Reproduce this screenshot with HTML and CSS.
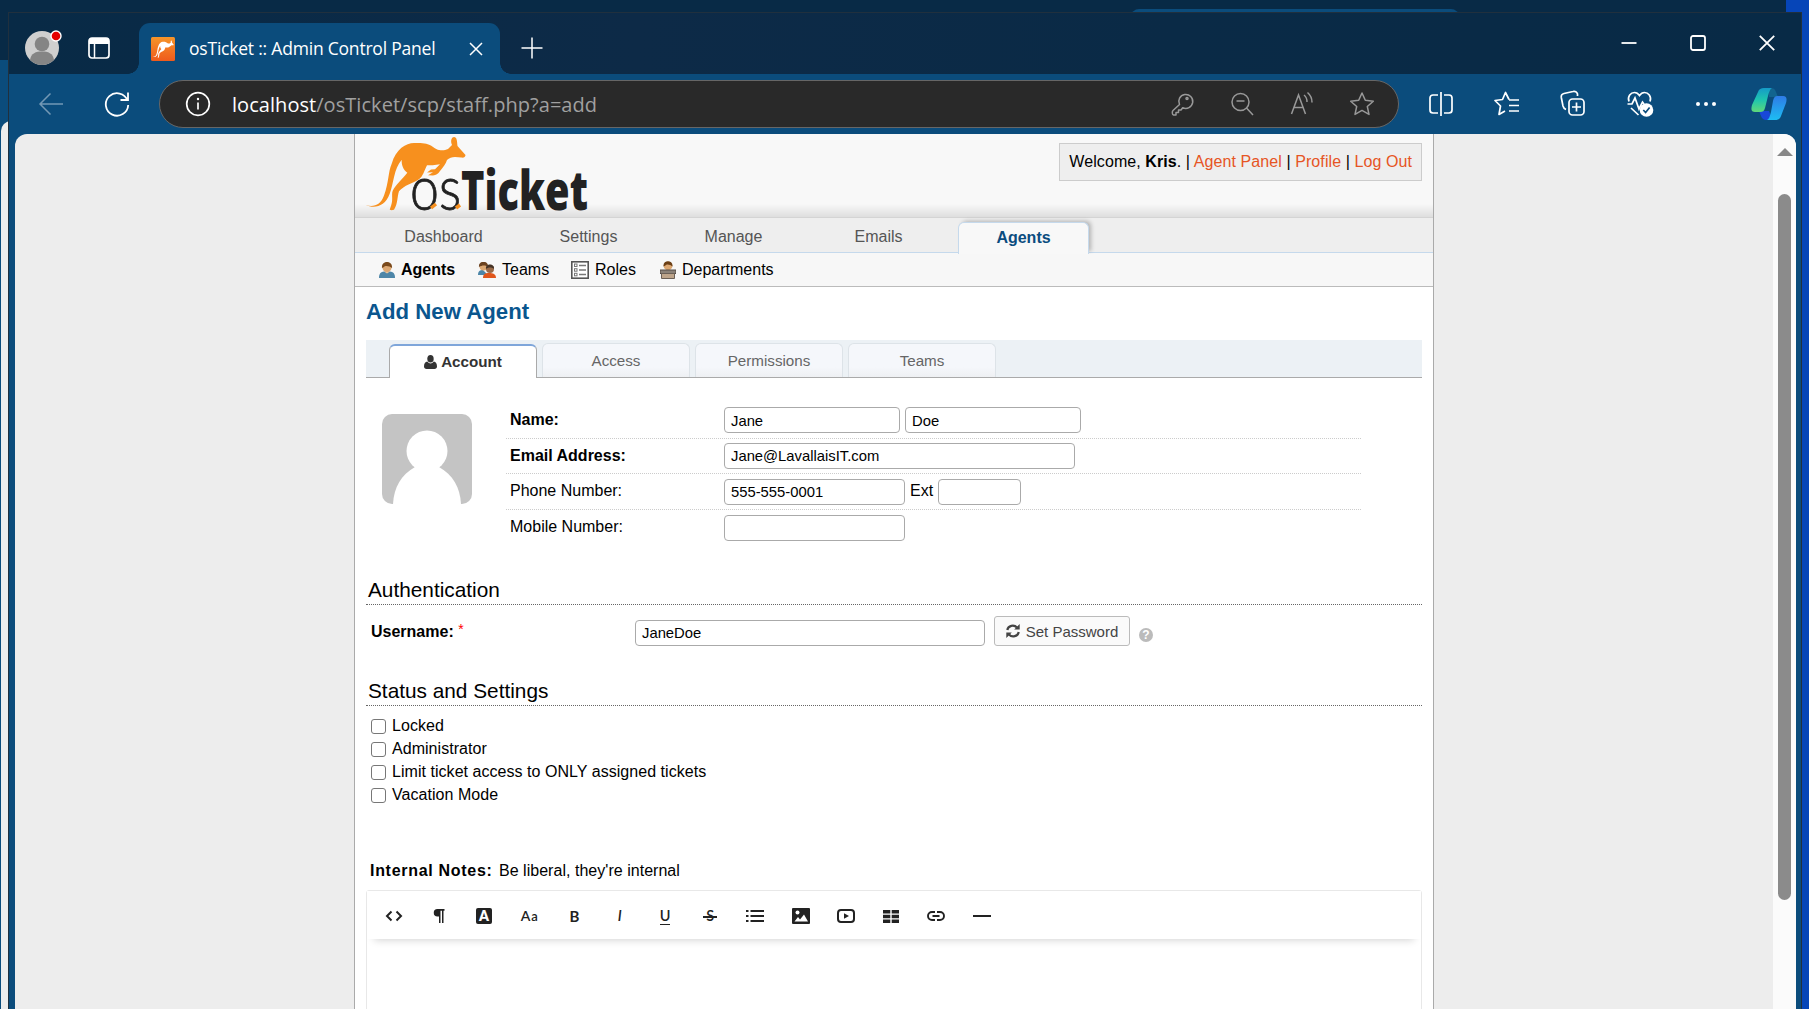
FILE: index.html
```html
<!DOCTYPE html>
<html lang="en">
<head>
<meta charset="utf-8">
<title>osTicket :: Admin Control Panel</title>
<link rel="stylesheet" href="styles.css">
</head>
<body>
<div class="desktop">
  <div class="back-window"><div class="back-strip"></div><div class="back-side"></div><div class="back-page"></div></div>
  <div class="window">
    <header class="titlebar">
      <svg class="profile" width="38" height="38" viewBox="0 0 38 38">
        <circle cx="18" cy="20" r="17" fill="#cfcfcf"/><circle cx="18" cy="16" r="7.3" fill="#858585"/>
        <path d="M6 32c1-7 6-8.500 12-8.500s11 1.500 12 8.500a17 17 0 0 1-24 0z" fill="#858585"/>
        <circle cx="32" cy="8" r="5" fill="#e60000" stroke="#fff" stroke-width="1.400"/>
      </svg>
      <svg class="workspaces" width="22" height="22" viewBox="0 0 22 22">
        <rect x="1" y="1" width="20" height="20" rx="3" fill="none" stroke="#fff" stroke-width="1.700"/><path d="M1 7V4a3 3 0 0 1 3-3h14a3 3 0 0 1 3 3v3z" fill="#fff"/><path d="M6.500 6v15" stroke="#fff" stroke-width="1.500"/>
      </svg>
      <div class="browser-tab">
        <svg class="favicon" width="24" height="24" viewBox="0 0 24 24">
          <defs><linearGradient id="fav" x1="0" y1="0" x2="0" y2="1"><stop offset="0" stop-color="#f6952a"/><stop offset="1" stop-color="#ef5a1c"/></linearGradient></defs>
          <rect width="24" height="24" rx="1.500" fill="url(#fav)"/>
          <path transform="translate(1.200 3.200) scale(.212 .235)" fill="#fff" d="M1.700 69c8 2.500 15 0 18.300-9.500C25 46 24 36 27.700 27.700 32 13 42 7 50 7c18-1 18 5 25 7 3 .5 6 .5 9-1l4-4c-2-5 0-8 2-8 3 0 3 4 3.500 9l8 9c0 2-2 3-4 2.500L91 21c-4 3-8 6-13 9-5 1-10 1-15 0-3 5-4 11-8 14-6 4-15 6-20 12-2 6-1 12-5 18.500-3 1-5 0-4-1 4-9 1-13 2.700-18 3-6 10-12 14.600-18-4-3-6-8-5.600-13-8 9-8 24-12 34C20 72 10 74 1.700 69z"/>
        </svg>
        <span class="tab-title">osTicket :: Admin Control Panel</span>
        <svg class="tab-close" width="14" height="14" viewBox="0 0 14 14"><path d="M1 1l12 12M13 1L1 13" stroke="#fff" stroke-width="1.500"/></svg>
      </div>
      <svg class="tab-new" width="22" height="22" viewBox="0 0 22 22"><path d="M11 .5v21M.5 11h21" stroke="#fff" stroke-width="1.500"/></svg>
      <div class="win-controls">
        <svg width="16" height="16" viewBox="0 0 16 16"><path d="M.5 8h15" stroke="#fff" stroke-width="1.800"/></svg>
        <svg width="16" height="16" viewBox="0 0 16 16"><rect x="1" y="1" width="14" height="14" rx="2" fill="none" stroke="#fff" stroke-width="1.800"/></svg>
        <svg width="16" height="16" viewBox="0 0 16 16"><path d="M.8.800l14.400 14.400M15.200.800L.8 15.200" stroke="#fff" stroke-width="1.800"/></svg>
      </div>
    </header>

    <nav class="toolbar">
      <svg class="back" width="26" height="26" viewBox="0 0 26 26" fill="none" stroke="#7398b5" stroke-width="1.500"><path d="M25 13H2M12.500 2.500L2 13l10.500 10.500"/></svg>
      <svg class="reload" width="26" height="26" viewBox="0 0 26 26" fill="none" stroke="#fff" stroke-width="1.800"><path d="M23.500 9.500A11.200 11.200 0 1 0 24.200 14M24 1.500v7.500h-7.500"/></svg>
      <div class="address">
        <svg width="26" height="26" viewBox="0 0 26 26"><circle cx="13" cy="13" r="11.300" fill="none" stroke="#fff" stroke-width="1.700"/><path d="M13 11.500v7" stroke="#fff" stroke-width="1.700"/><circle cx="13" cy="8" r="1.200" fill="#fff"/></svg>
        <span class="url"><b>localhost</b>/osTicket/scp/staff.php?a=add</span>
        <div class="address-actions">
          <svg width="26" height="26" viewBox="0 0 26 26"><path d="M10.500 13.500L4 19.500c-1 1-1 4 .5 4.500H7v-2.500h2.500V19H12l1.700-2.300a7 7 0 1 0-3.200-3.200z" stroke-linejoin="round"/><circle cx="18" cy="7.500" r="1"/></svg>
          <svg width="26" height="26" viewBox="0 0 26 26"><circle cx="11.500" cy="11" r="8.500"/><path d="M7.500 10h8M17.500 17l6.500 7"/></svg>
          <svg width="26" height="26" viewBox="0 0 26 26"><path d="M2.500 23L9.500 4l7 19M5 16.500h9M15 4c2 1.500 3 4 3 7M18.500 1.500c3 2.500 4.500 6 4.500 10"/></svg>
          <svg width="26" height="26" viewBox="0 0 26 26"><path d="M13 2l3.300 7.300 8 .9-6 5.300 1.700 7.900-7-4-7 4 1.700-7.900-6-5.300 8-.9z" stroke-linejoin="round"/></svg>
        </div>
      </div>
      <div class="browser-actions">
        <svg width="28" height="28" viewBox="0 0 28 28"><path d="M11 5H6a3 3 0 0 0-3 3v12a3 3 0 0 0 3 3h5M17 5h5a3 3 0 0 1 3 3v12a3 3 0 0 1-3 3h-5M14 2v24"/></svg>
        <svg width="28" height="28" viewBox="0 0 28 28"><path d="M16 9.500L12.500 2.500 9.500 9.500 2 10.500l5.500 5.500-1.500 8.500 6-3.500M16 10h10M16 15.500h10M16 21h10" stroke-linejoin="round"/></svg>
        <svg width="28" height="28" viewBox="0 0 28 28"><rect x="10" y="9" width="15" height="16" rx="3.500"/><path d="M17.500 12.500v9M13 17h9M7 19.500A5 5 0 0 1 4 16L2.300 7.500A3.500 3.500 0 0 1 5 3.500l9-2A3.500 3.500 0 0 1 18.500 4v2"/></svg>
        <svg width="28" height="28" viewBox="0 0 28 28"><path d="M3 11.500C1 6 5 2.500 8.500 2.500c2.500 0 4 1.500 5 3 1-1.500 2.500-3 5-3C22 2.500 26 6 24 11.500M1.500 14h4.500l3-6 4 11 3.500-7 1.500 2M5 18l7.500 7"/><circle cx="20.500" cy="20" r="6.800" fill="#fff" stroke="none"/><path d="M17.300 20l2.300 2.500 4-5" stroke="#0b4c7c"/></svg>
        <svg width="28" height="28" viewBox="0 0 28 28"><g fill="#fff" stroke="none"><circle cx="6" cy="14" r="2"/><circle cx="14" cy="14" r="2"/><circle cx="22" cy="14" r="2"/></g></svg>
      </div>
      <svg class="copilot" width="36" height="34" viewBox="0 0 36 34">
        <defs><linearGradient id="cg" x1="0" y1="0" x2="0" y2="1"><stop offset="0" stop-color="#159ac8"/><stop offset=".5" stop-color="#1fc6ae"/><stop offset="1" stop-color="#5fd87a"/></linearGradient>
        <linearGradient id="cb" x1="0" y1="0" x2="0" y2="1"><stop offset="0" stop-color="#2f7be6"/><stop offset="1" stop-color="#1dbdf2"/></linearGradient></defs>
        <path d="M18 2c4-2 6 0 7 3l2 5h-9z" fill="#12648f"/>
        <path d="M8 24h10l2 5-3 4h-2c-4 0-5-4-7-9z" fill="#1848d8"/>
        <path d="M7 5c1-3 3-4 6-4h8c-2 1-3 4-4 8l-3 12c-1 3-2 4-5 4H4c-4 0-4-3-3-7z" fill="url(#cg)"/>
        <path d="M30 29c-1 3-3 4-6 4h-8c2-1 3-4 4-8l2-11c1-4 2-5 5-5h5c4 0 4 3 3 7z" fill="url(#cb)"/>
      </svg>
    </nav>

    <div class="viewport">
      <div class="page">
        <div class="masthead">
          <svg class="logo" width="226" height="80" viewBox="0 0 226 80">
            <path fill="#f7901e" d="M1.700 69c8 2.500 15 0 18.300-9.500C25 46 24 36 27.700 27.700 32 13 42 7 50 7c18-1 18 5 25 7 3 .5 6 .5 9-1l4-4c-2-5 0-8 2-8 3 0 3 4 3.500 9l8 9c0 2-2 3-4 2.500L91 21c-3 0-6 1-8 3-1 4-4 7-7 11-2 3-4 4-7 4.500l-5-.3 5-3-6 .3 4-3 4-.2 5-5c-5 1-10 1-13 1-3 6-4 11-8 14-6 4-15 6-20 12-2 6-1 12-5 18.500-3 1-5 0-4-1 4-9 1-13 2.700-18 3-6 10-12 14.600-18-4-3-6-8-5.600-13-8 9-8 24-12 34C21 71 10 73 1.700 69z"/>
            <text class="logo-os" x="46" y="74" textLength="51" lengthAdjust="spacingAndGlyphs">os</text>
            <text class="logo-ticket" x="97" y="74" textLength="127" lengthAdjust="spacingAndGlyphs">Ticket</text>
            <path d="M67 72l5-4M92 72l4-3" stroke="#f7901e" stroke-width="3.500"/>
          </svg>
          <div class="welcome">Welcome, <b>Kris</b>. | <a>Agent Panel</a> | <a>Profile</a> | <a>Log Out</a></div>
        </div>
        <div class="nav"><a>Dashboard</a><a>Settings</a><a>Manage</a><a>Emails</a><a class="active">Agents</a></div>
        <div class="subnav">
          <a class="s-agents"><svg width="16" height="16" viewBox="0 0 16 16"><path d="M0 16c0-5 2-6 5-6.500h6c3 .5 5 1.500 5 6.500z" fill="#4d86a8"/><path d="M5 9.500l3 2 3-2z" fill="#e9c49b"/><circle cx="8" cy="5.500" r="4.600" fill="#dca873"/><path d="M3 6c-1-8 11-8 10 0-2-2-7-3-8-1z" fill="#7a4a1c"/></svg><b>Agents</b></a>
          <a class="s-teams"><svg width="18" height="16" viewBox="0 0 18 16"><path d="M0 13c0-4 2-5 5-5l5 5z" fill="#4d86a8"/><circle cx="5.500" cy="4.500" r="4" fill="#dca873"/><path d="M1 5c-1-7 10-7 9 0-2-2-6-2-9 0z" fill="#6b4220"/><path d="M5 16c0-4 2-5 6-5s7 1 7 5z" fill="#e0561c"/><circle cx="12" cy="7" r="4" fill="#9a6a48"/><path d="M8 7c-1-6 9-6 8 0-2-2-6-2-8 0z" fill="#453326"/></svg>Teams</a>
          <a class="s-roles"><svg width="18" height="18" viewBox="0 0 18 18"><rect x=".8" y=".8" width="16.400" height="16.400" fill="#fff" stroke="#555" stroke-width="1.600"/><path d="M8 4.500h7M8 9h7M8 13.500h7" stroke="#777" stroke-width="1.300"/><g fill="none" stroke="#777"><rect x="3.500" y="3" width="2.500" height="2.500"/><rect x="3.500" y="7.700" width="2.500" height="2.500"/><rect x="3.500" y="12.300" width="2.500" height="2.500"/></g></svg>Roles</a>
          <a class="s-depts"><svg width="16" height="18" viewBox="0 0 16 18"><circle cx="8" cy="5" r="4.300" fill="#dca873"/><path d="M3.500 5.500c-1-7 10-7 9 0-2-2-6-3-7-1z" fill="#6b3f15"/><path d="M0 9h16v3.500H0z" fill="#8a8178" stroke="#554d46"/><path d="M1.500 12.500h13v5h-13z" fill="#bda48a" stroke="#6b6056"/></svg>Departments</a>
        </div>

        <main class="content">
          <h2>Add New Agent</h2>
          <div class="tabs">
            <a class="active"><svg width="13" height="14" viewBox="0 0 13 14" fill="#333"><ellipse cx="6.500" cy="3.800" rx="3.200" ry="3.800"/><path d="M3.300 6.500c2 2.500 4.500 2.500 6.500 0 2 .5 3.200 2 3.200 5 0 1.500-1 2.500-2.500 2.500h-8C1 14 0 13 0 11.500c0-3 1.200-4.500 3.300-5z"/></svg>Account</a>
            <a>Access</a><a>Permissions</a><a>Teams</a>
          </div>

          <section class="identity">
            <svg class="avatar" width="90" height="90" viewBox="0 0 90 90"><rect width="90" height="90" rx="10" fill="#c4c4c4"/><circle cx="45" cy="37" r="20.500" fill="#fff"/><path d="M11 90c1-17 8-29 22-37h24c14 8 21 20 22 37z" fill="#fff"/></svg>
            <div class="fields">
              <div class="field r1"><label class="req">Name:</label><span class="input name">Jane</span><span class="input name">Doe</span></div>
              <div class="field r2"><label class="req">Email Address:</label><span class="input email">Jane@LavallaisIT.com</span></div>
              <div class="field r3"><label>Phone Number:</label><span class="input phone">555-555-0001</span><span class="ext">Ext</span><span class="input short"></span></div>
              <div class="field r4"><label>Mobile Number:</label><span class="input phone"></span></div>
            </div>
          </section>

          <h3>Authentication</h3>
          <div class="auth">
            <label class="req">Username: <sup>*</sup></label>
            <span class="input user">JaneDoe</span>
            <button type="button"><svg width="14" height="14" viewBox="0 0 14 14"><g fill="none" stroke="#444" stroke-width="2.200"><path d="M1.300 6C2 1.500 8 .2 11 3.500M12.700 8C12 12.500 6 13.800 3 10.500"/></g><path d="M13.700 0v5.500H8.200zM.3 14V8.500h5.500z" fill="#444"/></svg>Set Password</button>
            <span class="help">?</span>
          </div>

          <h3>Status and Settings</h3>
          <div class="checks">
            <label><i></i>Locked</label>
            <label><i></i>Administrator</label>
            <label><i></i>Limit ticket access to ONLY assigned tickets</label>
            <label><i></i>Vacation Mode</label>
          </div>

          <div class="notes"><b>Internal Notes:</b> Be liberal, they're internal</div>
          <div class="editor">
            <div class="editor-bar">
              <span><svg width="18" height="12" viewBox="0 0 18 12" fill="none" stroke="#222" stroke-width="2"><path d="M6.500 1.500L2 6l4.500 4.500M11.500 1.500L16 6l-4.500 4.500"/></svg></span>
              <span><svg width="12" height="14" viewBox="0 0 12 14"><path d="M4.500 0H11.500v1.800H10.500V14H9V1.800H7.500V14H6V7.500H4.500a3.700 3.700 0 0 1 0-7.500z" fill="#222"/></svg></span>
              <span><em class="ic-color">A</em></span>
              <span><em class="ic-size">A<small>a</small></em></span>
              <span><em class="ic-b">B</em></span>
              <span><em class="ic-i">I</em></span>
              <span><em class="ic-u">U</em></span>
              <span><em class="ic-s">S</em></span>
              <span><svg width="18" height="12" viewBox="0 0 18 12" stroke="#222" stroke-width="2"><path d="M0 1h2.500M0 6h2.500M0 11h2.500M4.500 1H18M4.500 6H18M4.500 11H18"/></svg></span>
              <span><svg width="18" height="16" viewBox="0 0 18 16"><rect width="18" height="16" rx="1" fill="#222"/><circle cx="5.500" cy="4.500" r="2" fill="#fff"/><path d="M2.500 13.500l3.500-4.500 2 2.500 4-5 4 7z" fill="#fff"/></svg></span>
              <span><svg width="18" height="14" viewBox="0 0 18 14"><rect x="1" y="1" width="16" height="12" rx="3" fill="none" stroke="#222" stroke-width="2"/><path d="M7 4.200L12 7l-5 2.800z" fill="#222"/></svg></span>
              <span><svg width="16" height="13" viewBox="0 0 16 13" fill="#222"><path d="M0 0h7.300v3.500H0zM8.700 0H16v3.500H8.700zM0 4.800h7.300v3.400H0zM8.700 4.800H16v3.400H8.700zM0 9.500h7.300V13H0zM8.700 9.500H16V13H8.700z"/></svg></span>
              <span><svg width="18" height="10" viewBox="0 0 18 10" fill="none" stroke="#222" stroke-width="1.900"><path d="M8 1H5a4 4 0 0 0 0 8h3M10 1h3a4 4 0 0 1 0 8h-3M5.500 5h7"/></svg></span>
              <span><svg width="18" height="2" viewBox="0 0 18 2"><path d="M0 0h18v2H0z" fill="#222"/></svg></span>
            </div>
          </div>
        </main>
      </div>
      <div class="scrollbar"><i class="up"></i><i class="thumb"></i></div>
    </div>
  </div>
</div>
</body>
</html>
```
FILE: styles.css
```css
* { box-sizing: border-box; }
body { margin: 0; overflow: hidden; font: 16px "Liberation Sans", Arial, sans-serif; color: #000; }
svg { display: block; flex: none; }
.desktop { position: relative; width: 1809px; height: 1009px; background: #0645b8; overflow: hidden; }

/* Windows on the desktop */
.back-window { position: absolute; left: 0; top: 0; width: 1786px; height: 1009px; background: #082a46; }
.back-strip { position: absolute; left: 1131px; top: 9px; width: 328px; height: 10px; background: #0b4c7c; border-radius: 8px 8px 0 0; }
.back-side { position: absolute; left: 0; top: 60px; width: 20px; height: 949px; background: #0b4c7c; }
.back-page { position: absolute; left: 1px; top: 121px; width: 30px; height: 888px; background: #ededed; border-radius: 10px 0 0 0; }
.window { position: absolute; left: 8px; top: 12px; width: 1794px; height: 997px; background: #0b4c7c; border: 1px solid #20303e; border-bottom: 0; display: flex; flex-direction: column; }

.titlebar { height: 61px; flex: none; display: flex; align-items: flex-start; background: linear-gradient(90deg, #082a46, #0d2a47 35%, #0a2a46 65%, #082a46); }
.profile { margin: 15px 0 0 15px; }
.workspaces { margin: 24px 0 0 26px; }
.browser-tab { position: relative; width: 361px; height: 51px; margin: 10px 0 0 29px; padding: 0 17px 0 12px; display: flex; align-items: center; background: #0b4c7c; border-radius: 11px 11px 0 0; }
.browser-tab::before, .browser-tab::after { content: ""; position: absolute; bottom: 0; width: 11px; height: 11px; }
.browser-tab::before { left: -11px; background: radial-gradient(circle at 0 0, transparent 10.5px, #0b4c7c 11px); }
.browser-tab::after { right: -11px; background: radial-gradient(circle at 100% 0, transparent 10.5px, #0b4c7c 11px); }
.tab-title { margin: -2px 0 0 14px; font: 17.5px "Open Sans", "Noto Sans", sans-serif; letter-spacing: -.21px; color: #fff; white-space: nowrap; flex: 1; }
.tab-new { margin: 24px 0 0 21px; }
.win-controls { margin: 22px 26px 0 auto; display: flex; gap: 53px; }

.toolbar { height: 60px; flex: none; display: flex; align-items: center; }
.back { margin-left: 29px; }
.reload { margin-left: 40px; }
.address { width: 1240px; height: 48px; margin-left: 29px; padding: 0 23px 0 25px; display: flex; align-items: center; background: #292929; border: 1px solid #666; border-radius: 24px; }
.url { margin-left: 21px; font: 20px "Open Sans", "Noto Sans", sans-serif; letter-spacing: .05px; color: #a0a0a0; white-space: nowrap; }
.url b { font-weight: 400; color: #fff; }
.address-actions { margin-left: auto; display: flex; gap: 34px; fill: none; stroke: #999; stroke-width: 1.5; }
.browser-actions { margin-left: 28px; display: flex; gap: 38.2px; fill: none; stroke: #fff; stroke-width: 1.7; }
.copilot { margin-left: 31px; }

.viewport { flex: 1; display: flex; margin: 0 5px 0 6px; background: #ededed; border-radius: 12px 12px 0 0; overflow: hidden; }
.scrollbar { width: 23px; flex: none; background: #fbfbfb; padding-top: 14px; display: flex; flex-direction: column; align-items: center; }
.up { border: 8px solid transparent; border-top: 0; border-bottom: 8px solid #888; }
.thumb { width: 13px; height: 706px; margin-top: 38px; background: #8b8b8b; border-radius: 7px; flex: none; }

/* Page */
.page { width: 1080px; margin: 0 auto; background: #fff; border: solid #aaa; border-width: 0 1px; }
.masthead { height: 83px; padding: 9px 11px 0 9px; display: flex; justify-content: space-between; align-items: flex-start; background: linear-gradient(#f8f8f8 0, #f8f8f8 70px, #dedede 83px); }
.logo { margin-top: -7px; overflow: visible; }
.logo-os { font: 300 61px Lato, sans-serif; fill: #222; stroke: #222; stroke-width: .8px; }
.logo-ticket { font: 800 54px "Open Sans", sans-serif; fill: #222; }
.welcome { height: 38px; padding: 0 9px; line-height: 36px; letter-spacing: .085px; background: #eee; border: 1px solid #ccc; white-space: nowrap; }
.welcome a { color: #e65524; }
.nav { height: 36px; padding: 4px 0 0 23px; display: flex; gap: 14px; background: #eee; border-top: 1px solid #d4d4d4; border-bottom: 1px solid #c5d9ec; }
.nav a { width: 131px; height: 31px; line-height: 30px; text-align: center; color: #555; }
.nav .active { height: 32px; line-height: 29px; font-weight: 700; color: #0a4c7f; background: #f8f8f8; border: 1px solid #c5d9ec; border-bottom: 0; border-radius: 6px 6px 0 0; box-shadow: 3px -2px 4px -1px rgba(0,0,0,.25); clip-path: inset(-8px -8px 0 -8px); }
.subnav { height: 34px; padding-left: 24px; display: flex; background: #f7f7f7; border-bottom: 1px solid #bbb; line-height: 33px; }
.subnav a { display: flex; align-items: center; gap: 6px; }
.s-agents { width: 99px; }
.s-teams { width: 93px; }
.s-roles { width: 89px; }

.content { padding: 7px 11px 0; }
h2 { margin: 0; font-size: 22.2px; line-height: 36px; color: #0a568e; }
.tabs { height: 38px; margin-top: 10px; padding: 3px 0 0 23px; display: flex; background: #ecf1f5; border-bottom: 1px solid #aaa; font-size: 15.2px; color: #666; }
.tabs a { width: 148px; height: 34px; margin: 0 0 0 5px; line-height: 34px; text-align: center; background: linear-gradient(#f5f7fb 70%, #eef0f3); border: 1px solid #dde3e8; border-bottom: 0; border-radius: 6px 6px 0 0; }
.tabs .active { height: 34px; margin: 1px 0 0; display: flex; justify-content: center; align-items: center; gap: 4px; color: #333; font-weight: 700; background: #fff; border: 1px solid #aaa; border-top: 2px solid #7fa6da; border-bottom: 0; }

.identity { display: flex; padding: 25px 0 0 16px; }
.avatar { margin-top: 11px; }
.fields { width: 855px; margin-left: 34px; }
.field { height: 36px; padding: 0 0 0 4px; display: flex; align-items: flex-start; line-height: 33px; border-bottom: 1px dotted #ccc; }
.field label { width: 214px; }
.field .input { margin-top: 4px; }
.r1 .input { line-height: 27px; }
.r2 { height: 35px; }
.r3 .input, .r4 .input { margin-top: 5px; }
.r3, .r4 { line-height: 34px; }
.r4 { border-bottom: 0; }
.req { font-weight: 700; }
.input { height: 26px; padding-left: 6px; line-height: 25px; font-size: 14.8px; background: #fff; border: 1px solid #aaa; border-radius: 4px; white-space: nowrap; }
.name { width: 176px; margin-right: 5px; }
.email { width: 351px; }
.phone { width: 181px; }
.ext { margin: 0 5px; }
.short { width: 83px; }

h3 { margin: 28px 0 0; height: 31px; padding-left: 2px; font-size: 20.8px; font-weight: 400; line-height: 31px; border-bottom: 1px dotted #666; }
.auth { height: 70px; padding: 11px 0 0 5px; display: flex; align-items: flex-start; }
.auth label { width: 264px; line-height: 32px; }
.auth + h3 { margin-top: 0; }
.auth sup { color: #f00; font-size: 14px; font-weight: 400; line-height: 0; vertical-align: 3px; }
.user { width: 350px; margin-top: 4px; }
.auth button { width: 136px; height: 30px; margin: 0 0 0 9px; padding: 0; display: flex; align-items: center; justify-content: center; gap: 6px; font: 15px "Liberation Sans", Arial, sans-serif; color: #444; background: #fafafa; border: 1px solid #bbb; border-radius: 3px; }
.help { width: 14px; height: 14px; margin: 12px 0 0 9px; border-radius: 50%; background: #bbb; color: #fff; font-size: 12px; font-weight: 700; line-height: 14px; text-align: center; }
.checks { padding: 8px 0 0 5px; }
.checks label { height: 23px; display: flex; align-items: center; gap: 6px; line-height: 23px; letter-spacing: .04px; }
.checks i { width: 15px; height: 15px; margin-top: 1px; border: 1.500px solid #777; border-radius: 3px; background: #fff; }
.notes { margin-top: 53px; padding-left: 4px; line-height: 24px; letter-spacing: .03px; }
.notes b { letter-spacing: .7px; margin-right: 2px; }
.editor { height: 140px; margin-top: 7px; border: 1px solid #e8e8e8; border-radius: 3px 3px 0 0; }
.editor-bar { height: 48px; padding: 2px 0 0 4px; display: flex; align-items: center; background: #fff; box-shadow: 0 8px 8px -7px rgba(0,0,0,.18); color: #222; }
.editor-bar span { width: 45.240px; display: flex; justify-content: center; }
.editor-bar em { font: 600 14.500px/16px Lato, sans-serif; }
.editor-bar .ic-color { width: 16px; height: 16px; text-align: center; font-weight: 800; font-size: 14px; color: #fff; background: #222; border-radius: 2px; }
.editor-bar .ic-size { font-size: 14px; }
.editor-bar small { font-size: 13px; margin-left: 1px; }
.editor-bar .ic-b { font-weight: 700; font-size: 15px; }
.editor-bar .ic-i { font-style: italic; }
.editor-bar .ic-u { border-bottom: 1.500px solid #222; }
.editor-bar .ic-s { position: relative; }
.editor-bar .ic-s::after { content: ""; position: absolute; left: -3px; right: -3px; top: 8px; height: 1.500px; background: #222; }
```
